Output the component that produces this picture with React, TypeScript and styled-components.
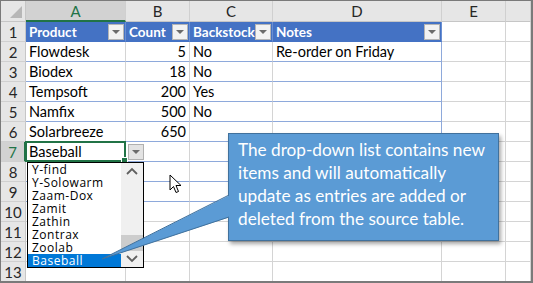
import React from 'react';
import styled, { createGlobalStyle, css } from 'styled-components';

const GlobalStyle = createGlobalStyle`
  html, body { margin: 0; padding: 0; background: #fff; }
  body { font-family: 'Lato', 'Liberation Sans', sans-serif; }
`;

const GREEN = '#217346';
const TABLE_BLUE = '#4472C4';
const TABLE_LINE = '#8EA9DB';
const GRID_LINE = '#d4d4d4';

const SheetCss = styled.div`
  position: relative;
  width: 533px;
  height: 283px;
  box-sizing: border-box;
  border: 1px solid #7a7a7a;
  border-right-width: 2px;
  border-bottom-width: 2px;
  display: grid;
  grid-template-columns: 25px 100px 64px 83px 169px 64px 1fr;
  grid-template-rows: 21px repeat(13, 20px);
  overflow: hidden;
  font-family: 'Lato', 'Liberation Sans', sans-serif;
`;

const CornerCss = styled.div`
  position: relative;
  background: #e6e6e6;
  border-right: 1px solid #c6c6c6;
  border-bottom: 1px solid #c6c6c6;
  &::after {
    content: '';
    position: absolute;
    right: 3px;
    bottom: 3px;
    border-style: solid;
    border-width: 0 0 12px 12px;
    border-color: transparent transparent #b7b7b7 transparent;
  }
`;

const ColHeadCss = styled.div<{ $active?: boolean }>`
  display: flex;
  align-items: center;
  justify-content: center;
  font-size: 15px;
  color: #262626;
  background: #e6e6e6;
  border-right: 1px solid #d0d0d0;
  border-bottom: 1px solid #c6c6c6;
  box-sizing: border-box;
  ${p => p.$active && css`
    background: #d2d2d2;
    color: ${GREEN};
    border-bottom: 2px solid ${GREEN};
  `}
`;

const RowHeadCss = styled.div<{ $active?: boolean }>`
  display: flex;
  align-items: center;
  justify-content: center;
  font-size: 15px;
  color: #262626;
  background: #e6e6e6;
  border-right: 1px solid #c6c6c6;
  border-bottom: 1px solid #d0d0d0;
  box-sizing: border-box;
  ${p => p.$active && css`
    background: #d2d2d2;
    color: ${GREEN};
    border-right: 2px solid ${GREEN};
  `}
`;

const CellCss = styled.div<{
  $kind: 'plain' | 'head' | 'body';
  $right?: boolean;
  $edge?: boolean;
  $selected?: boolean;
}>`
  position: relative;
  display: flex;
  align-items: center;
  justify-content: ${p => (p.$right ? 'flex-end' : 'space-between')};
  box-sizing: border-box;
  padding: 0 3px 0 3px;
  font-size: 14.5px;
  color: #000;
  white-space: nowrap;
  background: #fff;
  border-right: 1px solid ${GRID_LINE};
  border-bottom: 1px solid ${GRID_LINE};
  ${p => p.$kind === 'body' && css`
    border-bottom-color: ${TABLE_LINE};
  `}
  ${p => p.$kind === 'head' && css`
    background: ${TABLE_BLUE};
    color: #fff;
    font-weight: 700;
    font-size: 13.5px;
    padding-right: 1px;
    border-right-color: #6a8fd2;
    border-bottom-color: ${TABLE_BLUE};
  `}
  ${p => p.$edge && css`
    border-right-color: ${TABLE_LINE};
  `}
  ${p => p.$selected && css`
    &::after {
      content: '';
      position: absolute;
      left: -1px;
      top: -1px;
      right: -1px;
      bottom: -1px;
      border: 2px solid ${GREEN};
    }
    &::before {
      content: '';
      position: absolute;
      right: -3px;
      bottom: -3px;
      width: 5px;
      height: 5px;
      background: ${GREEN};
      border: 1px solid #fff;
      z-index: 1;
    }
  `}
`;

const FilterButtonCss = styled.div`
  width: 16px;
  height: 16px;
  flex-shrink: 0;
  box-sizing: border-box;
  background: #f2f2f2;
  border: 1px solid #b5b5b5;
  display: flex;
  align-items: center;
  justify-content: center;
  &::after {
    content: '';
    border-style: solid;
    border-width: 4px 4px 0 4px;
    border-color: #6b6b6b transparent transparent transparent;
  }
`;

const CellArrowCss = styled.div`
  position: absolute;
  left: 127px;
  top: 143px;
  width: 16px;
  height: 16px;
  box-sizing: border-box;
  background: #e3e3e3;
  border: 1px solid #b0b0b0;
  display: flex;
  align-items: center;
  justify-content: center;
  z-index: 3;
  &::after {
    content: '';
    border-style: solid;
    border-width: 4px 4px 0 4px;
    border-color: #6b6b6b transparent transparent transparent;
  }
`;

const ListBoxCss = styled.div`
  position: absolute;
  left: 26px;
  top: 161px;
  width: 117px;
  height: 106px;
  box-sizing: border-box;
  border: 1px solid #000;
  background: #fff;
  display: flex;
  z-index: 3;
`;

const ListItemsCss = styled.div`
  flex: 1;
  display: flex;
  flex-direction: column;
`;

const ListItemCss = styled.div<{ $selected?: boolean }>`
  height: 13px;
  line-height: 13px;
  padding-left: 4px;
  font-family: 'Open Sans', 'Liberation Sans', sans-serif;
  font-size: 12px;
  letter-spacing: 0.5px;
  color: #000;
  white-space: nowrap;
  ${p => p.$selected && css`
    background: #0078d7;
    color: #fff;
  `}
`;

const ScrollBarCss = styled.div`
  width: 22px;
  background: #f0f0f0;
  display: flex;
  flex-direction: column;
`;

const ScrollArrowCss = styled.div`
  height: 16px;
  display: flex;
  align-items: center;
  justify-content: center;
`;

const ScrollTrackCss = styled.div`
  flex: 1;
  display: flex;
  flex-direction: column;
  justify-content: flex-end;
`;

const ScrollThumbCss = styled.div`
  height: 16px;
  background: #cdcdcd;
`;

const CalloutCss = styled.div`
  position: absolute;
  left: 227px;
  top: 132px;
  width: 271px;
  height: 108px;
  box-sizing: border-box;
  padding: 4px 0 0 9px;
  background: #5b9bd5;
  border: 1px solid #41719c;
  box-shadow: 2px 3px 4px rgba(0, 0, 0, 0.35);
  color: #fff;
  font-family: 'Lato', 'Liberation Sans', sans-serif;
  font-size: 17.2px;
  line-height: 23px;
  z-index: 4;
`;

const CalloutTailCss = styled.svg`
  position: absolute;
  left: 0;
  top: 0;
  width: 533px;
  height: 283px;
  pointer-events: none;
  z-index: 5;
`;

const CursorCss = styled.svg`
  position: absolute;
  left: 168px;
  top: 173px;
  z-index: 3;
`;

const columns = ['A', 'B', 'C', 'D', 'E', ''];

type Row = [string, string, string, string];

const rows: Row[] = [
  ['Product', 'Count', 'Backstock', 'Notes'],
  ['Flowdesk', '5', 'No', 'Re-order on Friday'],
  ['Biodex', '18', 'No', ''],
  ['Tempsoft', '200', 'Yes', ''],
  ['Namfix', '500', 'No', ''],
  ['Solarbreeze', '650', '', ''],
  ['Baseball', '', '', ''],
  ['', '', '', ''],
  ['', '', '', ''],
  ['', '', '', ''],
  ['', '', '', ''],
  ['', '', '', ''],
  ['', '', '', ''],
];

const TABLE_ROWS = 9;
const listItems = ['Y-find', 'Y-Solowarm', 'Zaam-Dox', 'Zamit', 'Zathin', 'Zontrax', 'Zoolab', 'Baseball'];

function Chevron({ up }: { up?: boolean }) {
  return (
    <svg width="12" height="8" viewBox="0 0 12 8">
      <polyline
        points={up ? '1,7 6,2 11,7' : '1,1 6,6 11,1'}
        fill="none"
        stroke="#606060"
        strokeWidth="1.8"
      />
    </svg>
  );
}

export default function App() {
  return (
    <>
      <GlobalStyle />
      <SheetCss>
        <CornerCss />
        {columns.map((c, i) => (
          <ColHeadCss key={i} $active={c === 'A'}>{c}</ColHeadCss>
        ))}
        {rows.map((row, r) => {
          const rowNum = r + 1;
          const inTable = rowNum <= TABLE_ROWS;
          return (
            <React.Fragment key={r}>
              <RowHeadCss $active={rowNum === 7}>{rowNum}</RowHeadCss>
              {row.map((value, c) => (
                <CellCss
                  key={c}
                  $kind={!inTable ? 'plain' : rowNum === 1 ? 'head' : 'body'}
                  $right={c === 1 && rowNum > 1}
                  $edge={inTable && c === 3 && rowNum > 1}
                  $selected={rowNum === 7 && c === 0}
                >
                  <span>{value}</span>
                  {rowNum === 1 && <FilterButtonCss />}
                </CellCss>
              ))}
              <CellCss $kind="plain" />
              <CellCss $kind="plain" />
            </React.Fragment>
          );
        })}

        <CellArrowCss />

        <ListBoxCss>
          <ListItemsCss>
            {listItems.map((item, i) => (
              <ListItemCss key={item} $selected={i === listItems.length - 1}>{item}</ListItemCss>
            ))}
          </ListItemsCss>
          <ScrollBarCss>
            <ScrollArrowCss><Chevron up /></ScrollArrowCss>
            <ScrollTrackCss><ScrollThumbCss /></ScrollTrackCss>
            <ScrollArrowCss><Chevron /></ScrollArrowCss>
          </ScrollBarCss>
        </ListBoxCss>

        <CursorCss width="13" height="20" viewBox="0 0 13 20">
          <path d="M1 1 L1 16 L4.5 12.5 L7 18.5 L9.5 17.5 L7 11.5 L12 11.5 Z" fill="#fff" stroke="#000" strokeWidth="1" strokeLinejoin="round" />
        </CursorCss>

        <CalloutCss>
          The drop-down list contains new<br />
          items and will automatically<br />
          update as entries are added or<br />
          deleted from the source table.
        </CalloutCss>
        <CalloutTailCss viewBox="0 0 533 283">
          <polygon points="229,194 101,258 229,216" fill="#5b9bd5" />
          <polyline points="228,194 101,258 228,216" fill="none" stroke="#41719c" strokeWidth="1" />
        </CalloutTailCss>
      </SheetCss>
    </>
  );
}
